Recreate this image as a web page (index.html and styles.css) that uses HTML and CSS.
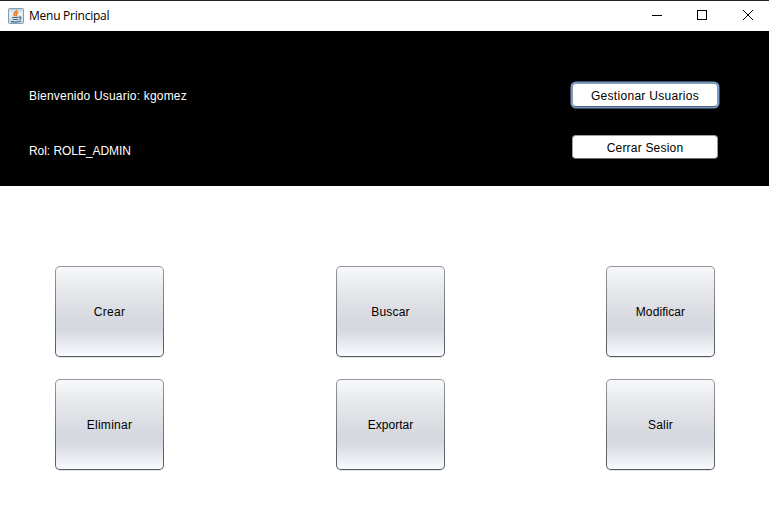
FILE: index.html
```html
<!DOCTYPE html>
<html lang="es">
<head>
<meta charset="utf-8">
<title>Menu Principal</title>
<link rel="stylesheet" href="styles.css">
</head>
<body>
<div class="window">
  <header class="titlebar">
    <svg class="app-icon" width="16" height="16" viewBox="0 0 16 16">
      <defs>
        <linearGradient id="tile" x1="0" y1="0" x2="0" y2="1">
          <stop offset="0" stop-color="#b5c8d8"/><stop offset=".3" stop-color="#eef3f6"/><stop offset="1" stop-color="#c5d3de"/>
        </linearGradient>
      </defs>
      <rect x=".5" y=".5" width="15" height="15" rx="1" fill="url(#tile)" stroke="#849eb2"/>
      <path d="M8.700 1.800C9.200 4 5.600 4.300 6 6.300C6.200 7.100 7 7.600 7.200 8.300M10.300 4.300C8 5.400 7.700 6 8.400 7C8.700 7.500 8.500 8 8.200 8.400" fill="none" stroke="#e87820" stroke-width="1.500"/>
      <path d="M4 9.500H10.500M4.800 11.500H10M3 13.400C6 14.300 10 14.200 13 13M10.700 9C13.600 8.200 13.600 10.700 11 11.500" fill="none" stroke="#416d8e" stroke-width="1.200"/>
    </svg>
    <h1 class="title">Menu Principal</h1>
    <svg class="controls" width="138" height="30" viewBox="0 0 138 30" fill="none" stroke="#000">
      <path d="M21 14.500H31"/>
      <rect x="66.500" y="9.500" width="9" height="9"/>
      <path d="M112 9L122 19M122 9L112 19"/>
    </svg>
  </header>
  <section class="banner">
    <div class="session">
      <p class="label wide">Bienvenido Usuario: kgomez</p>
      <p class="label tight">Rol: ROLE_ADMIN</p>
    </div>
    <div class="account">
      <button class="flat focused"><span class="wider">Gestionar Usuarios</span></button>
      <button class="flat"><span class="wide">Cerrar Sesion</span></button>
    </div>
  </section>
  <main class="menu">
    <button class="tile"><span class="wider">Crear</span></button>
    <button class="tile"><span class="wide">Buscar</span></button>
    <button class="tile"><span class="snug">Modificar</span></button>
    <button class="tile"><span class="wider">Eliminar</span></button>
    <button class="tile"><span>Exportar</span></button>
    <button class="tile"><span class="wide">Salir</span></button>
  </main>
</div>
</body>
</html>
```
FILE: styles.css
```css
* { box-sizing: border-box; }
body { margin: 0; }
.window {
  width: 769px;
  height: 528px;
  overflow: hidden;
  background: #fff;
  color: #000;
  font: 12px/14px "Liberation Sans", Arial, sans-serif;
}
.titlebar {
  display: flex;
  align-items: center;
  height: 31px;
  padding-left: 8px;
  border-top: 1px solid #29232c;
}
.app-icon { margin-bottom: 1px; }
.title {
  margin: 0 0 0 5px;
  font: 12px/16px "Open Sans", "Noto Sans", sans-serif;
  letter-spacing: -0.25px;
}
.controls { margin-left: auto; }
.banner {
  display: flex;
  justify-content: space-between;
  height: 155px;
  padding: 50px 49px 0 29px;
  background: #000;
}
.session {
  display: flex;
  flex-direction: column;
  gap: 41px;
  padding-top: 8px;
  color: #fff;
}
.label { margin: 0; }
.tight { letter-spacing: -0.05px; }
.wide { letter-spacing: 0.2px; }
.wider { letter-spacing: 0.3px; }
.snug { letter-spacing: 0.08px; }
.account {
  display: flex;
  flex-direction: column;
  gap: 28px;
  width: 150px;
  padding: 2px 1px 0 2px;
}
button {
  padding: 0;
  font: inherit;
  color: inherit;
}
.flat {
  width: 146px;
  height: 24px;
  padding-top: 1px;
  border: 1px solid #999da2;
  border-bottom-color: #646a70;
  border-radius: 4px;
  background: #fff;
}
.focused {
  border-color: #8e9aa8;
  border-bottom-color: #52606e;
  box-shadow: 0 0 0 1.5px #719ccb;
}
.menu {
  display: grid;
  grid-template-columns: 281px 270px 109px;
  grid-auto-rows: 91px;
  row-gap: 22px;
  padding: 80px 0 0 55px;
}
.tile {
  width: 109px;
  height: 91px;
  border: 1px solid transparent;
  border-radius: 5px;
  background:
    linear-gradient(#f8f9fa 0%, #e5e7ea 27%, #d6d9df 60%, #d6d9df 71%, #f8faff 100%) padding-box,
    linear-gradient(#95989e, #545960) border-box;
  box-shadow: 0 1px 0 #e2e3e5;
}
```
